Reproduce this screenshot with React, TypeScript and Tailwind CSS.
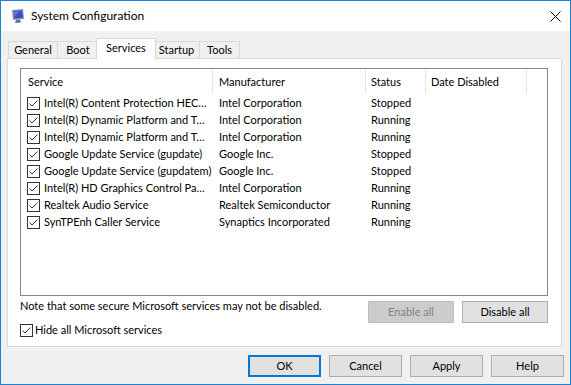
import React from "react";

const rows = [
  { name: "Intel(R) Content Protection HEC…", maker: "Intel Corporation", status: "Stopped" },
  { name: "Intel(R) Dynamic Platform and T…", maker: "Intel Corporation", status: "Running" },
  { name: "Intel(R) Dynamic Platform and T…", maker: "Intel Corporation", status: "Running" },
  { name: "Google Update Service (gupdate)", maker: "Google Inc.", status: "Stopped" },
  { name: "Google Update Service (gupdatem)", maker: "Google Inc.", status: "Stopped" },
  { name: "Intel(R) HD Graphics Control Pa…", maker: "Intel Corporation", status: "Running" },
  { name: "Realtek Audio Service", maker: "Realtek Semiconductor", status: "Running" },
  { name: "SynTPEnh Caller Service", maker: "Synaptics Incorporated", status: "Running" },
];

function Check() {
  return (
    <span className="w-[13px] h-[13px] border border-[#333333] bg-white flex items-center justify-center shrink-0">
      <svg width="11" height="11" viewBox="0 0 11 11">
        <path d="M1.5 5.5 L4 8 L9.5 2.5" fill="none" stroke="#333333" strokeWidth="1" />
      </svg>
    </span>
  );
}

function Btn({ label, primary, disabled, wide }: { label: string; primary?: boolean; disabled?: boolean; wide?: boolean }) {
  return (
    <div
      className={
        (wide ? "w-[86px] " : "w-[73px] ") +
        "h-[22px] flex items-center justify-center " +
        (primary
          ? "border-2 border-[#0078d7] bg-[#e1e1e1] text-black"
          : disabled
          ? "border border-[#bfbfbf] bg-[#cccccc] text-[#838383]"
          : "border border-[#adadad] bg-[#e1e1e1] text-black")
      }
    >
      {label}
    </div>
  );
}

function AppIcon() {
  return (
    <svg width="16" height="16" viewBox="0 0 16 16">
      <path d="M2 2 L13 1 L14 11 L3 12 Z" fill="#8a8fa8" />
      <path d="M3.5 3.2 L12 2.4 L12.8 9.8 L4.3 10.6 Z" fill="#3b4fc4" />
      <path d="M4 4 L9 3.6 L5 8 Z" fill="#7d8fe8" opacity="0.7" />
      <path d="M6 12 L10 11.6 L11 14.5 L5 15 Z" fill="#6b6f82" />
    </svg>
  );
}

export default function App() {
  return (
    <div
      className="w-[571px] h-[385px] border border-[#1883d7] bg-[#f0f0f0] flex flex-col text-[11px] text-black overflow-hidden"
      style={{ fontFamily: "Lato, 'Liberation Sans', sans-serif" }}
    >
      {/* Title bar */}
      <div className="h-[30px] bg-white flex items-center shrink-0">
        <div className="ml-[9px] mr-[5px]">
          <AppIcon />
        </div>
        <span className="text-[12px]">System Configuration</span>
        <div className="ml-auto mr-[9px] w-[12px] h-[12px] flex items-center justify-center">
          <svg width="11" height="11" viewBox="0 0 11 11">
            <path d="M0.5 0.5 L10.5 10.5 M10.5 0.5 L0.5 10.5" stroke="#000" strokeWidth="1" />
          </svg>
        </div>
      </div>

      {/* Tabs */}
      <div className="flex items-end ml-[7px] mt-[7px] h-[21px] relative z-10">
        <div className="w-[50px] h-[18px] border border-[#d9d9d9] flex items-center justify-center">General</div>
        <div className="w-[42px] -ml-px h-[18px] border border-[#d9d9d9] flex items-center justify-center">Boot</div>
        <div className="w-[60px] -ml-[3px] h-[21px] bg-white border border-[#d9d9d9] border-b-0 flex items-center justify-center pb-[1px]">
          Services
        </div>
        <div className="w-[46px] -ml-[2px] h-[18px] border border-[#d9d9d9] border-l-0 flex items-center justify-center">Startup</div>
        <div className="w-[41px] -ml-px h-[18px] border border-[#d9d9d9] flex items-center justify-center">Tools</div>
      </div>

      {/* Panel */}
      <div className="ml-[6px] mr-[8px] -mt-px h-[289px] bg-white border border-[#d9d9d9] flex flex-col pl-[12px] pr-[13px] pt-[9px]">
        {/* List */}
        <div className="h-[228px] border border-[#828790] bg-white flex flex-col">
          <div className="h-[26px] flex items-center">
            <div className="w-[192px] h-[24px] border-r border-[#e5e5e5] pl-[7px] flex items-center">Service</div>
            <div className="w-[153px] h-[24px] border-r border-[#e5e5e5] pl-[6px] flex items-center">Manufacturer</div>
            <div className="w-[60px] h-[24px] border-r border-[#e5e5e5] pl-[5px] flex items-center">Status</div>
            <div className="w-[101px] h-[24px] border-r border-[#e5e5e5] pl-[5px] flex items-center">Date Disabled</div>
          </div>
          {rows.map((r, i) => (
            <div key={i} className="h-[17px] flex items-center">
              <div className="w-[192px] flex items-center pl-[6px] gap-[4px] whitespace-nowrap overflow-hidden">
                <Check />
                <span>{r.name}</span>
              </div>
              <div className="w-[153px] pl-[6px] whitespace-nowrap">{r.maker}</div>
              <div className="w-[60px] pl-[5px]">{r.status}</div>
            </div>
          ))}
        </div>

        <div className="h-[22px] mt-[5px] flex items-start">
          <span className="leading-[14px] -mt-[2px]">Note that some secure Microsoft services may not be disabled.</span>
          <div className="ml-auto flex gap-[8px]">
            <Btn label="Enable all" disabled wide />
            <Btn label="Disable all" wide />
          </div>
        </div>

        <div className="flex items-center gap-[2px] mt-px h-[13px]">
          <Check />
          <span>Hide all Microsoft services</span>
        </div>
      </div>

      {/* Bottom buttons */}
      <div className="flex justify-end gap-[8px] mr-[6px] mt-[8px]">
        <Btn label="OK" primary />
        <Btn label="Cancel" />
        <Btn label="Apply" />
        <Btn label="Help" />
      </div>
    </div>
  );
}
